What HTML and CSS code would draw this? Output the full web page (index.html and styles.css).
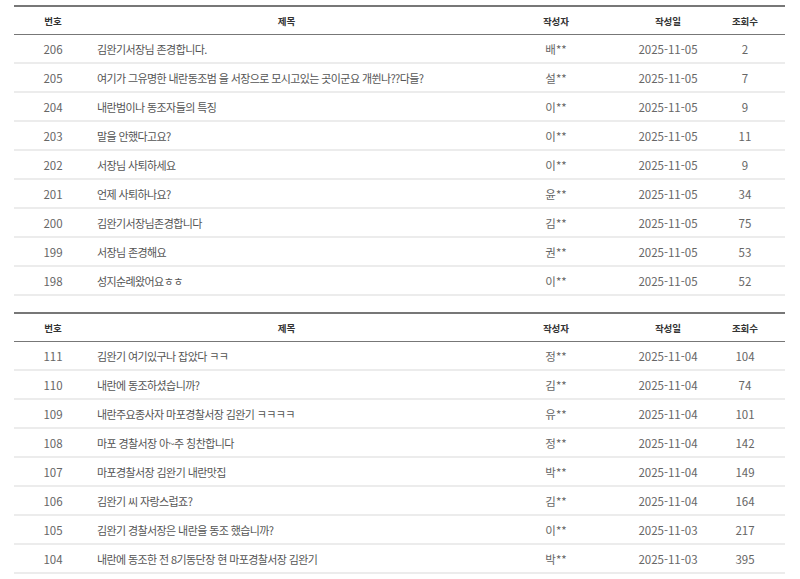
FILE: index.html
```html
<!DOCTYPE html>
<html lang="ko">
<head>
<meta charset="utf-8">
<title>게시판</title>
<link rel="stylesheet" href="styles.css">
</head>
<body>
<div class="page">
  <table class="board">
    <colgroup><col class="c-no"><col class="c-title"><col class="c-writer"><col class="c-date"><col class="c-hit"></colgroup>
    <thead><tr><th>번호</th><th>제목</th><th>작성자</th><th>작성일</th><th>조회수</th></tr></thead>
    <tbody>
      <tr><td>206</td><td class="title">김완기서장님 존경합니다.</td><td>배**</td><td>2025-11-05</td><td>2</td></tr>
      <tr><td>205</td><td class="title">여기가 그유명한 내란동조범 을 서장으로 모시고있는 곳이군요 개쒼나??다들?</td><td>설**</td><td>2025-11-05</td><td>7</td></tr>
      <tr><td>204</td><td class="title">내란범이나 동조자들의 특징</td><td>이**</td><td>2025-11-05</td><td>9</td></tr>
      <tr><td>203</td><td class="title">말을 안했다고요?</td><td>이**</td><td>2025-11-05</td><td>11</td></tr>
      <tr><td>202</td><td class="title">서장님 사퇴하세요</td><td>이**</td><td>2025-11-05</td><td>9</td></tr>
      <tr><td>201</td><td class="title">언제 사퇴하나요?</td><td>윤**</td><td>2025-11-05</td><td>34</td></tr>
      <tr><td>200</td><td class="title">김완기서장님존경합니다</td><td>김**</td><td>2025-11-05</td><td>75</td></tr>
      <tr><td>199</td><td class="title">서장님 존경해요</td><td>권**</td><td>2025-11-05</td><td>53</td></tr>
      <tr><td>198</td><td class="title">성지순례왔어요ㅎㅎ</td><td>이**</td><td>2025-11-05</td><td>52</td></tr>
    </tbody>
  </table>
  <table class="board">
    <colgroup><col class="c-no"><col class="c-title"><col class="c-writer"><col class="c-date"><col class="c-hit"></colgroup>
    <thead><tr><th>번호</th><th>제목</th><th>작성자</th><th>작성일</th><th>조회수</th></tr></thead>
    <tbody>
      <tr><td>111</td><td class="title">김완기 여기있구나 잡았다 ㅋㅋ</td><td>정**</td><td>2025-11-04</td><td>104</td></tr>
      <tr><td>110</td><td class="title">내란에 동조하셨습니까?</td><td>김**</td><td>2025-11-04</td><td>74</td></tr>
      <tr><td>109</td><td class="title">내란주요종사자 마포경찰서장 김완기 ㅋㅋㅋㅋ</td><td>유**</td><td>2025-11-04</td><td>101</td></tr>
      <tr><td>108</td><td class="title">마포 경찰서장 아~주 칭찬합니다</td><td>정**</td><td>2025-11-04</td><td>142</td></tr>
      <tr><td>107</td><td class="title">마포경찰서장 김완기 내란맛집</td><td>박**</td><td>2025-11-04</td><td>149</td></tr>
      <tr><td>106</td><td class="title">김완기 씨 자랑스럽죠?</td><td>김**</td><td>2025-11-04</td><td>164</td></tr>
      <tr><td>105</td><td class="title">김완기 경찰서장은 내란을 동조 했습니까?</td><td>이**</td><td>2025-11-03</td><td>217</td></tr>
      <tr><td>104</td><td class="title">내란에 동조한 전 8기동단장 현 마포경찰서장 김완기</td><td>박**</td><td>2025-11-03</td><td>395</td></tr>
    </tbody>
  </table>
</div>
</body>
</html>
```
FILE: styles.css
```css
html, body {
  margin: 0;
  padding: 0;
  background: #fff;
}
.page {
  padding: 5px 15px 0 14px;
  display: flex;
  flex-direction: column;
  gap: 16px;
  font-family: "Noto Sans CJK KR", "Noto Sans", sans-serif;
}
.board {
  width: 100%;
  border-collapse: collapse;
  table-layout: fixed;
  border-top: 2px solid #777;
}
.c-no { width: 78px; }
.c-writer { width: 150px; }
.c-date { width: 74px; }
.c-hit { width: 80px; }
.board th {
  height: 27px;
  padding: 0;
  font-size: 9.5px;
  font-weight: 700;
  color: #333;
  text-align: center;
  border-bottom: 1px solid #777;
}
.board td {
  height: 27px;
  padding: 0;
  font-size: 11.5px;
  color: #666;
  text-align: center;
  border-bottom: 2px solid #ececec;
  white-space: nowrap;
  overflow: hidden;
}
.board td.title {
  text-align: left;
  padding-left: 5px;
  font-size: 11px;
  letter-spacing: -0.6px;
  color: #555;
}
```
